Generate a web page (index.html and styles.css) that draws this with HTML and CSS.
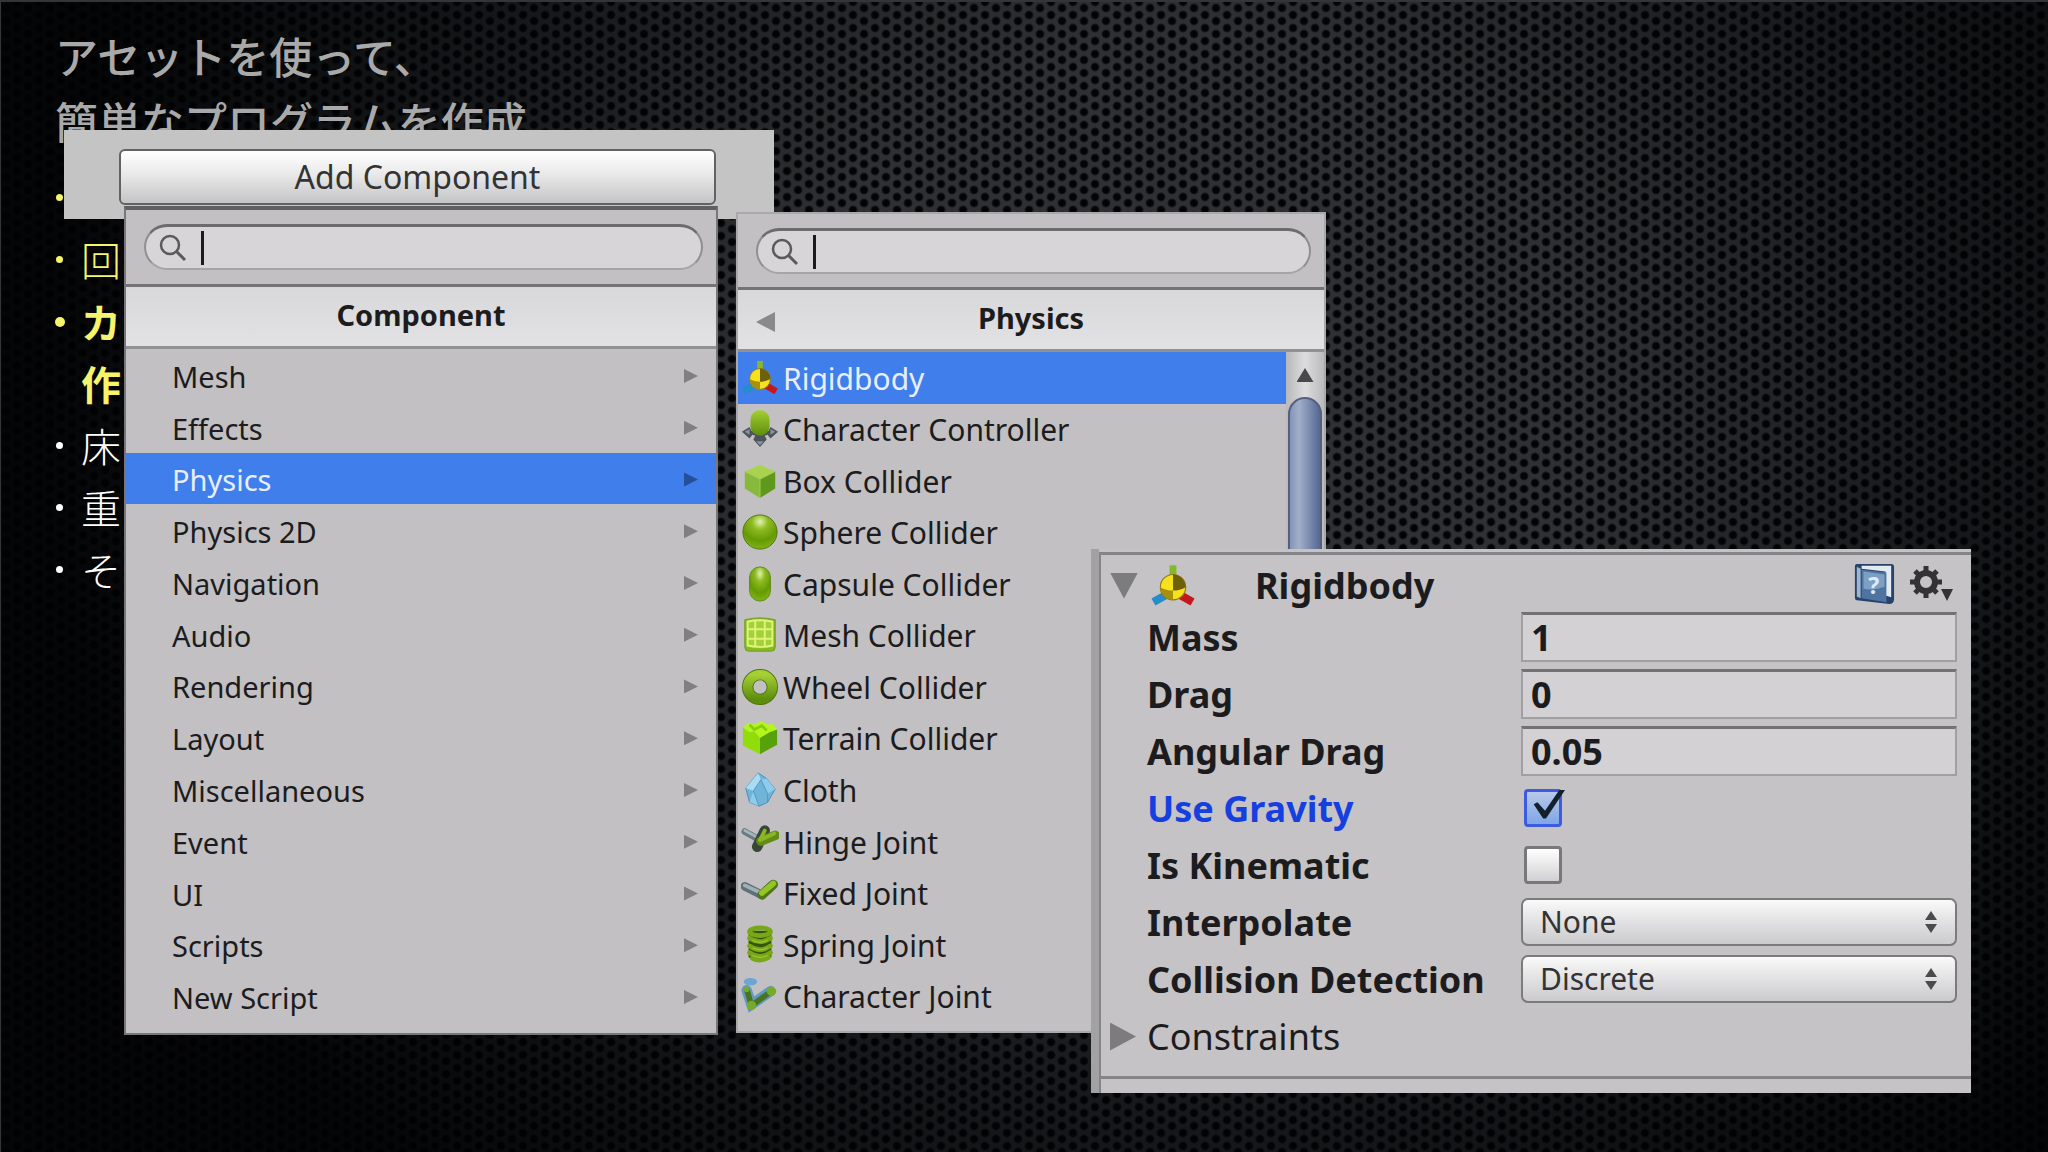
FILE: index.html
```html
<!DOCTYPE html>
<html lang="ja">
<head>
<meta charset="utf-8">
<title>簡単なプログラムを作成</title>
<link rel="stylesheet" href="styles.css">
</head>
<body>
<main class="slide">
  <svg class="mesh" aria-hidden="true">
    <defs>
      <radialGradient id="hole"><stop stop-color="#010203"/><stop offset=".6" stop-color="#040506"/><stop offset="1" stop-color="#2d2e31"/></radialGradient>
      <pattern id="holes" width="22" height="13" patternUnits="userSpaceOnUse">
        <rect width="22" height="13" fill="#2f3033"/>
        <g fill="url(#hole)"><circle cx="5" cy="6" r="5"/><circle cx="16" cy="0" r="5"/><circle cx="16" cy="13" r="5"/></g>
      </pattern>
    </defs>
    <rect width="100%" height="100%" fill="url(#holes)"/>
  </svg>
  <div class="shade"></div>

  <section class="notes">
    <h1 class="title">アセットを使って、<br>簡単なプログラムを作成</h1>
    <ul class="points">
      <li class="point warm"></li>
      <li class="point warm">回</li>
      <li class="point warm strong">カ<br>作</li>
      <li class="point">床</li>
      <li class="point">重</li>
      <li class="point">そ</li>
    </ul>
  </section>

  <div class="button-strip"><button class="add-button" type="button">Add Component</button></div>

  <section class="picker picker-root">
    <div class="search-bar">
      <label class="search">
        <svg viewBox="0 0 28 28" width="28" height="28" aria-hidden="true"><circle cx="11" cy="11" r="9" fill="none" stroke="#5a5a5c" stroke-width="2.5"/><path d="M17 17l9 9" stroke="#5a5a5c" stroke-width="3"/></svg>
        <span class="caret"></span><input type="text" aria-label="Search components">
      </label>
    </div>
    <h2 class="picker-title">Component</h2>
    <ul class="list list-root">
      <li><button class="item" type="button">Mesh</button></li>
      <li><button class="item" type="button">Effects</button></li>
      <li><button class="item selected" type="button">Physics</button></li>
      <li><button class="item" type="button">Physics 2D</button></li>
      <li><button class="item" type="button">Navigation</button></li>
      <li><button class="item" type="button">Audio</button></li>
      <li><button class="item" type="button">Rendering</button></li>
      <li><button class="item" type="button">Layout</button></li>
      <li><button class="item" type="button">Miscellaneous</button></li>
      <li><button class="item" type="button">Event</button></li>
      <li><button class="item" type="button">UI</button></li>
      <li><button class="item" type="button">Scripts</button></li>
      <li><button class="item" type="button">New Script</button></li>
    </ul>
  </section>

  <section class="picker picker-physics">
    <div class="search-bar">
      <label class="search">
        <svg viewBox="0 0 28 28" width="28" height="28" aria-hidden="true"><circle cx="11" cy="11" r="9" fill="none" stroke="#5a5a5c" stroke-width="2.5"/><path d="M17 17l9 9" stroke="#5a5a5c" stroke-width="3"/></svg>
        <span class="caret"></span><input type="text" aria-label="Search physics components">
      </label>
    </div>
    <h2 class="picker-title"><button class="back" type="button" aria-label="Back"></button>Physics</h2>
    <div class="scroll-area">
    <ul class="list list-physics">
      <li><button class="item selected" type="button"><svg viewBox="0 0 40 40" aria-hidden="true"><use href="#axes"/></svg>Rigidbody</button></li>
      <li><button class="item" type="button"><svg viewBox="0 0 40 40" aria-hidden="true"><path d="M1 23l8-5 2 4h18l2-4 8 5-8 7-3-4-3 1 2 4-7 8-7-8 2-4-3-1-3 4z" fill="#4b535b"/><path d="M4 23l5-3v6zM36 23l-5-3v6zM16 33h8l-4 4z" fill="#8a949d"/><rect x="10" y="0" width="20" height="27" rx="10" fill="url(#green)"/></svg>Character Controller</button></li>
      <li><button class="item" type="button"><svg viewBox="0 0 40 40" aria-hidden="true"><path d="M20 3l16 7-16 8-16-8z" fill="#a9d34f"/><path d="M4 10l16 8v20L4 28z" fill="#86b93c"/><path d="M36 10l-16 8v20l16-10z" fill="#5f981b"/><path d="M4 10l16 8 16-8M20 18v20" stroke="#a4cd58" fill="none"/></svg>Box Collider</button></li>
      <li><button class="item" type="button"><svg viewBox="0 0 40 40" aria-hidden="true"><circle cx="20" cy="20" r="18" fill="url(#ball)" stroke="#4d7611"/></svg>Sphere Collider</button></li>
      <li><button class="item" type="button"><svg viewBox="0 0 40 40" aria-hidden="true"><rect x="9" y="2" width="22" height="36" rx="11" fill="url(#ball)" stroke="#5c8a1b"/></svg>Capsule Collider</button></li>
      <li><button class="item" type="button"><svg viewBox="0 0 40 40" aria-hidden="true"><path d="M4 4q16-4 32 0v29q0 4-4 4H8q-4 0-4-4z" fill="#86ba22" stroke="#6f9b1c"/><path d="M6 5q14-3 28 0v27q-14 4-28 0z" fill="#a3d13a"/><path d="M15 4v29M25 4v29M6 14h28M6 24h28M7 6q13-3 26 0v25q-13 3-26 0z" fill="none" stroke="#e0f47b" stroke-width="2"/></svg>Mesh Collider</button></li>
      <li><button class="item" type="button"><svg viewBox="0 0 40 40" aria-hidden="true"><circle cx="20" cy="20" r="13" fill="none" stroke="#4d7611" stroke-width="12"/><circle cx="20" cy="20" r="13" fill="none" stroke="url(#green)" stroke-width="10"/></svg>Wheel Collider</button></li>
      <li><button class="item" type="button"><svg viewBox="0 0 40 40" aria-hidden="true"><path d="M2 9l6-5 6 2 7-4 8 4 4-1 5 6-18 10z" fill="#b6f51c"/><path d="M2 9l7 5 5-1 6 7v17L2 28z" fill="#91dc0a"/><path d="M38 11l-8 3-10 6v17l18-10z" fill="#57a10a"/><path d="M9 6l5 5 8-4 5 5" fill="none" stroke="#83d00c" stroke-width="3"/></svg>Terrain Collider</button></li>
      <li><button class="item" type="button"><svg viewBox="0 0 40 40" aria-hidden="true"><path d="M18 2l9 6 9 11-8 14-9 4-10-4-4-15z" fill="#70b4d9" stroke="#4b8db2"/><path d="M18 2L5 18l8 3 8-12z" fill="#a8dcf5"/><path d="M21 9l7 15 8-5-9-11zM13 21l-4 12 10 4z" fill="#8dcced"/><path d="M21 9l-8 12 6 16M21 9l7 15v9" fill="none" stroke="#5297bf"/></svg>Cloth</button></li>
      <li><button class="item" type="button"><svg viewBox="0 0 40 40" aria-hidden="true"><path d="M4 9l18 10" stroke="#697b82" stroke-width="7" stroke-linecap="round"/><path d="M4 8l15 8" stroke="#a3b4bb" stroke-width="3" stroke-linecap="round"/><path d="M25 8l-8 17" stroke="#384638" stroke-width="11" stroke-linecap="round"/><path d="M36 13L21 19" stroke="#618c16" stroke-width="10" stroke-linecap="round"/><path d="M35 11l-13 6M25 8l-5 10" stroke="#8ab622" stroke-width="4" stroke-linecap="round"/></svg>Hinge Joint</button></li>
      <li><button class="item" type="button"><svg viewBox="0 0 40 40" aria-hidden="true"><path d="M4 13l18 9" stroke="#607078" stroke-width="9" stroke-linecap="round"/><path d="M4 12l15 7" stroke="#9fb0b6" stroke-width="4" stroke-linecap="round"/><path d="M34 11L22 22" stroke="#51751a" stroke-width="10" stroke-linecap="round"/><path d="M34 10L22 20" stroke="#94c526" stroke-width="6" stroke-linecap="round"/></svg>Fixed Joint</button></li>
      <li><button class="item" type="button"><svg viewBox="0 0 40 40" aria-hidden="true"><path d="M8 5v28q12 8 24 0V5z" fill="#35540c"/><g fill="none" stroke="#78a817" stroke-width="5" stroke-linecap="round"><ellipse cx="20" cy="6" rx="11" ry="4"/><path d="M9 13q11 7 22 0M9 21q11 8 22 0M9 28q11 8 22 0M12 34q8 4 17-1"/></g><path d="M12 15q8 4 16 0M12 23q8 4 16 0M12 31q8 4 16 0" fill="none" stroke="#a4cf3b"/></svg>Spring Joint</button></li>
      <li><button class="item" type="button"><svg viewBox="0 0 40 40" aria-hidden="true"><path d="M6 14l5 15 20-14" stroke="#6399c4" stroke-width="11" stroke-linecap="round" fill="none"/><ellipse cx="10" cy="5" rx="7" ry="4" fill="#6ea5d2"/><path d="M6 13l5 17 21-15" stroke="#4a7520" stroke-width="6" fill="none"/><g fill="#74ab27"><circle cx="6" cy="13" r="3"/><circle cx="11" cy="30" r="5"/><circle cx="32" cy="15" r="5"/></g></svg>Character Joint</button></li>
    </ul>
    <div class="scrollbar"><span class="arrow-up"></span><span class="thumb"></span></div>
    </div>
  </section>

  <section class="inspector">
    <div class="inspector-body">
      <header class="inspector-head">
        <span class="fold open"></span>
        <svg class="axes-icon" viewBox="0 0 40 40" aria-hidden="true">
          <defs>
            <linearGradient id="green" x2="0" y2="1"><stop stop-color="#a5cf35"/><stop offset="1" stop-color="#5c8d0c"/></linearGradient>
            <radialGradient id="ball" cx=".5" cy=".2" r=".8"><stop stop-color="#e0f3ae"/><stop offset=".3" stop-color="#8cba20"/><stop offset=".7" stop-color="#659a05"/><stop offset="1" stop-color="#80b414"/></radialGradient>
            <g id="axes">
              <path d="M20 20V2" stroke="#86b82a" stroke-width="6"/><path d="M17 26L3 34" stroke="#248dca" stroke-width="7"/><path d="M23 26l14 8" stroke="#c5181c" stroke-width="7"/>
              <circle cx="20" cy="21" r="11" fill="#f6e11c" stroke="#8c7a12"/>
              <path d="M20 10a11 11 0 0 1 11 11q-5 3-11 3z" fill="#6e6008"/>
              <path d="M9 21q5 3 11 3v8a11 11 0 0 1-11-11z" fill="#a8900e"/>
            </g>
          </defs>
          <use href="#axes"/>
        </svg>
        <h2 class="inspector-title">Rigidbody</h2>
        <button class="tool" type="button" aria-label="Help">
          <svg viewBox="0 0 44 46" width="42" height="44" aria-hidden="true"><path d="M4 2h36q3 0 3 3v34q0 5-5 5L4 40q-2 0-2-3V5q0-3 2-3z" fill="#27436a"/><path d="M9 4h31v33l-6-2V10L9 7z" fill="#e3eaf2"/><path d="M4 5l4 2v31l-4-2z" fill="#9db6d0"/><path d="M9 8l26 3v31L9 38z" fill="#4f74a0"/><path d="M11 10l22 3v13q-10 4-22 2z" fill="#7c9fc4"/><text x="16" y="34" class="book-mark">?</text></svg>
        </button>
        <button class="tool" type="button" aria-label="Settings">
          <svg viewBox="0 0 44 40" width="44" height="40" aria-hidden="true"><circle cx="17" cy="18" r="9" fill="none" stroke="#333" stroke-width="6"/><g stroke="#333" stroke-width="5"><path d="M17 2v6M17 28v6M1 18h6M27 18h6M6 7l4 4M24 25l4 4M28 7l-4 4M10 25l-4 4"/></g><path d="M32 25h12l-6 12z" fill="#333"/></svg>
        </button>
      </header>
      <form class="fields">
        <label for="mass">Mass</label><input class="number" id="mass" type="text" value="1">
        <label for="drag">Drag</label><input class="number" id="drag" type="text" value="0">
        <label for="angular">Angular Drag</label><input class="number" id="angular" type="text" value="0.05">
        <label class="changed" for="gravity">Use Gravity</label><span class="tick"><input class="check" id="gravity" type="checkbox" checked><svg class="tick-mark" viewBox="0 0 40 40" aria-hidden="true"><path d="M7 16l4-2 8 9L34 1h6L20 31h-3z" fill="#14202c"/></svg></span>
        <label for="kinematic">Is Kinematic</label><span class="tick"><input class="check" id="kinematic" type="checkbox"></span>
        <label for="interpolate">Interpolate</label><span class="choice"><select id="interpolate"><option>None</option></select></span>
        <label for="collision">Collision Detection</label><span class="choice"><select id="collision"><option>Discrete</option></select></span>
      </form>
      <button class="constraints" type="button"><span class="fold"></span>Constraints</button>
    </div>
  </section>
</main>
</body>
</html>
```
FILE: styles.css
```css
* { box-sizing: border-box; }
body { margin: 0; background: #000; }
button, input, select { font: inherit; color: inherit; margin: 0; }
ul { list-style: none; margin: 0; padding: 0; }
h1, h2 { margin: 0; }

.slide {
  position: relative;
  min-height: 100vh;
  overflow: hidden;
  border-top: 2px solid #333638;
  border-left: 1px solid #333638;
  font-family: "Noto Sans", "Open Sans", "Noto Sans CJK JP", sans-serif;
  font-size: 30px;
  color: #1c1c1e;
}
.mesh, .shade { position: absolute; inset: 0; width: 100%; height: 100%; }
.shade {
  background:
    radial-gradient(ellipse 56% 92% at 58% 35%, rgba(0,0,0,0) 35%, rgba(0,2,4,.5) 66%, rgba(0,1,2,.9) 100%);
}

.notes {
  position: relative;
  padding: 21px 54px;
  font-family: "Noto Sans CJK JP", sans-serif;
}
.title { font-size: 43px; line-height: 65px; font-weight: 500; color: #a9a9a9; }
.points { padding-top: 13px; font-size: 40px; line-height: 62px; font-weight: 300; color: #fff; }
.point { position: relative; min-height: 62px; padding-left: 26px; }
.point::before {
  content: "";
  position: absolute;
  left: 1px;
  top: 28px;
  width: 7px;
  height: 7px;
  border-radius: 50%;
  background: currentColor;
}
.warm { color: #f6f46a; }
.strong { font-weight: 700; }
.strong::before { width: 10px; height: 10px; left: 0; top: 27px; }

.button-strip {
  position: absolute;
  left: 63px;
  top: 128px;
  width: 710px;
  height: 89px;
  padding: 19px 58px 15px 55px;
  background: #c5c4c5;
}
.add-button {
  width: 100%;
  height: 56px;
  padding: 0;
  border: 2px solid #626264;
  border-radius: 6px;
  background: linear-gradient(#fff, #e9e9ea 45%, #c4c3c5);
  font-size: 32px;
  line-height: 50px;
  color: #333;
}

.picker {
  position: absolute;
  background: #c2c0c2;
  border: 2px solid #77777a;
}
.picker-root { left: 123px; top: 204px; width: 594px; border-top: 4px solid #606062; }
.picker-physics { left: 735px; top: 210px; width: 590px; border-color: #a9a9ab; }
.search-bar { padding: 14px 13px 14px 18px; border-bottom: 3px solid #747476; }
.picker-physics .search-bar { padding-bottom: 13px; }
.search {
  display: flex;
  align-items: center;
  height: 46px;
  padding: 0 16px 0 13px;
  border: 2px solid #8f8f91;
  border-top: 3px solid #6c6c6e;
  border-bottom-color: #a5a5a7;
  border-radius: 23px;
  background: #d7d5d8;
}
.caret { width: 3px; height: 34px; margin-left: 14px; background: #1b1b1d; }
.search input { flex: 1; min-width: 0; padding: 0; border: 0; outline: 0; background: none; }
.picker-title {
  position: relative;
  height: 62px;
  border-bottom: 3px solid #929294;
  background: linear-gradient(#d8d7d9, #e2e1e3);
  font-size: 29px;
  line-height: 56px;
  font-weight: 700;
  text-align: center;
}
.back {
  position: absolute;
  left: 18px;
  top: 22px;
  width: 19px;
  height: 20px;
  padding: 0;
  border: 0;
  background: #89898b;
  clip-path: polygon(100% 0, 100% 100%, 0 50%);
}
.list { display: flex; flex-direction: column; flex: 1; }
.list li { display: flex; flex: 1; }
.list-root { height: 673px; margin-bottom: 11px; }
.list-physics { height: 670px; margin-bottom: 9px; }
.item {
  display: flex;
  flex: 1;
  align-items: center;
  padding: 2px 0 0 3px;
  border: 0;
  background: none;
  line-height: 38px;
  text-align: left;
}
.item svg { width: 38px; height: 40px; margin: -2px 4px 0 0; }
.list-root .item { justify-content: space-between; padding: 4px 18px 0 46px; font-size: 29px; }
.list-root .item::after {
  content: "";
  width: 14px;
  height: 14px;
  margin-top: -2px;
  background: #808082;
  clip-path: polygon(0 0, 100% 50%, 0 100%);
}
.item.selected { background: #407eeb; color: #e8eeff; }
.list-root .item.selected::after { background: #234f9b; }
.scroll-area { display: flex; }
.scrollbar {
  display: flex;
  flex-direction: column;
  align-items: center;
  width: 38px;
  padding-top: 16px;
  background: linear-gradient(90deg, #b8b7b9, #dddcde 50%, #bab9bb);
}
.arrow-up { width: 17px; height: 14px; background: #49494b; clip-path: polygon(50% 0, 100% 100%, 0 100%); }
.thumb {
  flex: 1;
  width: 34px;
  margin-top: 15px;
  border: 2px solid #55617c;
  border-radius: 17px;
  background: linear-gradient(90deg, #8494b6, #a2afc9 30%, #6a7ca4 80%, #566791);
}

.inspector {
  position: absolute;
  left: 1090px;
  top: 547px;
  width: 880px;
  padding-top: 3px;
  border-left: 8px solid #a2a1a3;
  background: #c5c3c5;
}
.inspector-body {
  padding: 4px 14px 14px 9px;
  border-top: 3px solid #858587;
  border-left: 2px solid #858587;
}
.inspector-head { display: flex; align-items: center; height: 53px; padding-right: 4px; }
.fold {
  flex: none;
  width: 26px;
  height: 28px;
  background: #7c7b7d;
  clip-path: polygon(0 0, 100% 50%, 0 100%);
}
.fold.open { width: 28px; height: 26px; clip-path: polygon(0 0, 100% 0, 50% 100%); }
.axes-icon { width: 46px; height: 46px; margin-left: 12px; }
.inspector-title { flex: 1; padding-left: 59px; font-size: 36px; line-height: 50px; font-weight: 700; }
.tool { display: flex; padding: 0 0 4px; border: 0; background: none; margin-left: 14px; }
.book-mark { font-size: 24px; font-weight: 700; fill: #dcebf7; }
.fields {
  display: grid;
  grid-template-columns: 374px 1fr;
  grid-auto-rows: 50px;
  row-gap: 7px;
  align-items: center;
  padding-left: 37px;
  font-size: 36px;
  font-weight: 700;
}
.changed { color: #163fe0; }
.number {
  width: 100%;
  height: 50px;
  padding: 0 8px;
  border: 2px solid #a09fa1;
  border-top: 3px solid #727274;
  background: #d3d1d4;
}
.tick { position: relative; display: flex; padding-left: 3px; }
.check {
  appearance: none;
  width: 38px;
  height: 38px;
  border: 3px solid #78787a;
  border-radius: 4px;
  background: linear-gradient(#fff, #d1d0d2);
}
.check:checked { border-color: #3d5be0; background: linear-gradient(#b9c9e8, #7da7e6); }
.tick-mark { position: absolute; left: 5px; top: 0; width: 40px; height: 38px; }
.choice { position: relative; display: flex; }
.choice::before, .choice::after {
  content: "";
  position: absolute;
  right: 20px;
  width: 12px;
  height: 9px;
  background: #4b4b4d;
}
.choice::before { top: 13px; clip-path: polygon(50% 0, 100% 100%, 0 100%); }
.choice::after { top: 26px; clip-path: polygon(0 0, 100% 0, 50% 100%); }
.choice select {
  appearance: none;
  width: 100%;
  height: 48px;
  padding: 0 17px 2px;
  border: 2px solid #7b7b7d;
  border-radius: 7px;
  background: linear-gradient(#fafafa, #dddcde 60%, #cbcacc);
  font-size: 30px;
  font-weight: 400;
  color: #333;
}
.constraints {
  display: flex;
  align-items: center;
  width: 100%;
  height: 65px;
  padding: 0;
  border: 0;
  background: none;
  gap: 11px;
  font-size: 36px;
}
.inspector-body::after {
  content: "";
  display: block;
  margin: 7px -14px 0 -9px;
  border-top: 3px solid #858587;
}
```
